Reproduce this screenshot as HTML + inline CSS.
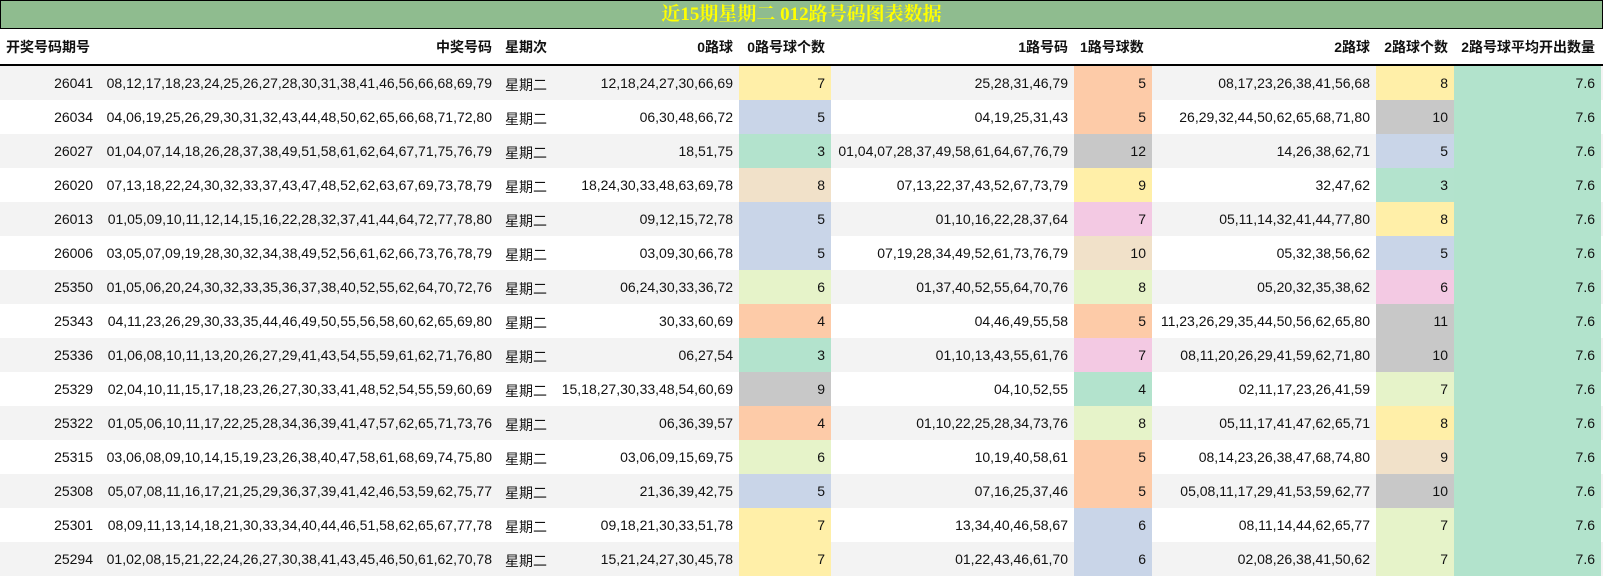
<!DOCTYPE html><html><head><meta charset="utf-8"><style>
body{margin:0;width:1604px;height:576px;background:#fff;font-family:"Liberation Sans","Noto Sans CJK SC",sans-serif;font-size:14px;color:#111;overflow:hidden;position:relative}
.t{position:absolute;left:0;top:0;width:1601px;height:27px;background:#8fbc8f;border:1px solid #000;text-align:center;font:bold 19px/27px "Liberation Serif","Noto Serif CJK SC",serif;color:#ffff00}
.tb{position:absolute;left:0;top:29px;width:1603px}
.r{display:flex;height:34px}
.r>div{box-sizing:border-box;padding:0 6px;text-align:right;white-space:nowrap;line-height:34px;flex:none}
.h{height:35px;border-bottom:2px solid #000;font-weight:bold}
.h>div{line-height:36px}
.o{background:#f3f3f3}
.r>div:nth-child(1){width:99px}.r>div:nth-child(2){width:399px}.r>div:nth-child(3){width:56px;text-align:left;padding:0 0 0 7px}.r>div:nth-child(4){width:185px}.r>div:nth-child(5){width:92px}.r>div:nth-child(6){width:243px}.r>div:nth-child(7){width:78px}.r>div:nth-child(8){width:224px}.r>div:nth-child(9){width:78px}.r>div:nth-child(10){width:147px;background:#b2e3cc}
.h>div:nth-child(10){background:none}
.h>div:nth-child(1){text-align:left}
.r:not(.h)>div:nth-child(3){line-height:38px}
.Y{background:#ffefa8}.B{background:#c9d5e8}.G{background:#b3e3cd}.P{background:#fdcba8}.S{background:#c8c8c8}.E{background:#f1e1c9}.K{background:#f3c9e3}.L{background:#e6f3c9}
</style></head><body>
<div class="t">近15期星期二 012路号码图表数据</div>
<div class="tb">
<div class="r h"><div>开奖号码期号</div><div>中奖号码</div><div>星期次</div><div>0路球</div><div>0路号球个数</div><div>1路号码</div><div style="text-align:left">1路号球数</div><div>2路球</div><div>2路球个数</div><div>2路号球平均开出数量</div></div>
<div class="r o"><div>26041</div><div>08,12,17,18,23,24,25,26,27,28,30,31,38,41,46,56,66,68,69,79</div><div>星期二</div><div>12,18,24,27,30,66,69</div><div class="Y">7</div><div>25,28,31,46,79</div><div class="P">5</div><div>08,17,23,26,38,41,56,68</div><div class="Y">8</div><div>7.6</div></div>
<div class="r"><div>26034</div><div>04,06,19,25,26,29,30,31,32,43,44,48,50,62,65,66,68,71,72,80</div><div>星期二</div><div>06,30,48,66,72</div><div class="B">5</div><div>04,19,25,31,43</div><div class="P">5</div><div>26,29,32,44,50,62,65,68,71,80</div><div class="S">10</div><div>7.6</div></div>
<div class="r o"><div>26027</div><div>01,04,07,14,18,26,28,37,38,49,51,58,61,62,64,67,71,75,76,79</div><div>星期二</div><div>18,51,75</div><div class="G">3</div><div>01,04,07,28,37,49,58,61,64,67,76,79</div><div class="S">12</div><div>14,26,38,62,71</div><div class="B">5</div><div>7.6</div></div>
<div class="r"><div>26020</div><div>07,13,18,22,24,30,32,33,37,43,47,48,52,62,63,67,69,73,78,79</div><div>星期二</div><div>18,24,30,33,48,63,69,78</div><div class="E">8</div><div>07,13,22,37,43,52,67,73,79</div><div class="Y">9</div><div>32,47,62</div><div class="G">3</div><div>7.6</div></div>
<div class="r o"><div>26013</div><div>01,05,09,10,11,12,14,15,16,22,28,32,37,41,44,64,72,77,78,80</div><div>星期二</div><div>09,12,15,72,78</div><div class="B">5</div><div>01,10,16,22,28,37,64</div><div class="K">7</div><div>05,11,14,32,41,44,77,80</div><div class="Y">8</div><div>7.6</div></div>
<div class="r"><div>26006</div><div>03,05,07,09,19,28,30,32,34,38,49,52,56,61,62,66,73,76,78,79</div><div>星期二</div><div>03,09,30,66,78</div><div class="B">5</div><div>07,19,28,34,49,52,61,73,76,79</div><div class="E">10</div><div>05,32,38,56,62</div><div class="B">5</div><div>7.6</div></div>
<div class="r o"><div>25350</div><div>01,05,06,20,24,30,32,33,35,36,37,38,40,52,55,62,64,70,72,76</div><div>星期二</div><div>06,24,30,33,36,72</div><div class="L">6</div><div>01,37,40,52,55,64,70,76</div><div class="L">8</div><div>05,20,32,35,38,62</div><div class="K">6</div><div>7.6</div></div>
<div class="r"><div>25343</div><div>04,11,23,26,29,30,33,35,44,46,49,50,55,56,58,60,62,65,69,80</div><div>星期二</div><div>30,33,60,69</div><div class="P">4</div><div>04,46,49,55,58</div><div class="P">5</div><div>11,23,26,29,35,44,50,56,62,65,80</div><div class="S">11</div><div>7.6</div></div>
<div class="r o"><div>25336</div><div>01,06,08,10,11,13,20,26,27,29,41,43,54,55,59,61,62,71,76,80</div><div>星期二</div><div>06,27,54</div><div class="G">3</div><div>01,10,13,43,55,61,76</div><div class="K">7</div><div>08,11,20,26,29,41,59,62,71,80</div><div class="S">10</div><div>7.6</div></div>
<div class="r"><div>25329</div><div>02,04,10,11,15,17,18,23,26,27,30,33,41,48,52,54,55,59,60,69</div><div>星期二</div><div>15,18,27,30,33,48,54,60,69</div><div class="S">9</div><div>04,10,52,55</div><div class="G">4</div><div>02,11,17,23,26,41,59</div><div class="L">7</div><div>7.6</div></div>
<div class="r o"><div>25322</div><div>01,05,06,10,11,17,22,25,28,34,36,39,41,47,57,62,65,71,73,76</div><div>星期二</div><div>06,36,39,57</div><div class="P">4</div><div>01,10,22,25,28,34,73,76</div><div class="L">8</div><div>05,11,17,41,47,62,65,71</div><div class="Y">8</div><div>7.6</div></div>
<div class="r"><div>25315</div><div>03,06,08,09,10,14,15,19,23,26,38,40,47,58,61,68,69,74,75,80</div><div>星期二</div><div>03,06,09,15,69,75</div><div class="L">6</div><div>10,19,40,58,61</div><div class="P">5</div><div>08,14,23,26,38,47,68,74,80</div><div class="E">9</div><div>7.6</div></div>
<div class="r o"><div>25308</div><div>05,07,08,11,16,17,21,25,29,36,37,39,41,42,46,53,59,62,75,77</div><div>星期二</div><div>21,36,39,42,75</div><div class="B">5</div><div>07,16,25,37,46</div><div class="P">5</div><div>05,08,11,17,29,41,53,59,62,77</div><div class="S">10</div><div>7.6</div></div>
<div class="r"><div>25301</div><div>08,09,11,13,14,18,21,30,33,34,40,44,46,51,58,62,65,67,77,78</div><div>星期二</div><div>09,18,21,30,33,51,78</div><div class="Y">7</div><div>13,34,40,46,58,67</div><div class="B">6</div><div>08,11,14,44,62,65,77</div><div class="L">7</div><div>7.6</div></div>
<div class="r o"><div>25294</div><div>01,02,08,15,21,22,24,26,27,30,38,41,43,45,46,50,61,62,70,78</div><div>星期二</div><div>15,21,24,27,30,45,78</div><div class="Y">7</div><div>01,22,43,46,61,70</div><div class="B">6</div><div>02,08,26,38,41,50,62</div><div class="L">7</div><div>7.6</div></div>
</div>
</body></html>
